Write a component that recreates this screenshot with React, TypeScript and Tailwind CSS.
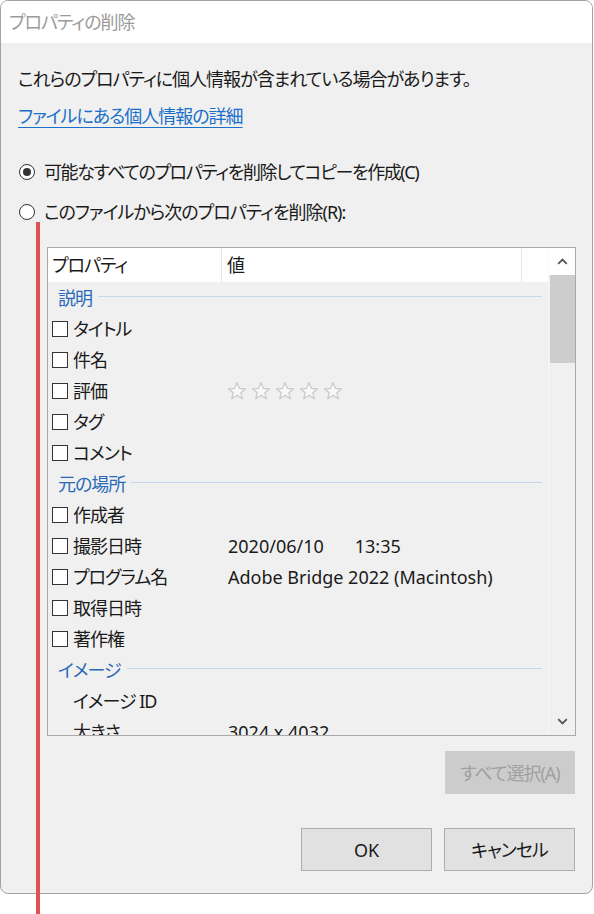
import React from "react";

const FONT = "[font-family:'Noto_Sans','Noto_Sans_CJK_JP',sans-serif]";

function Star() {
  return (
    <svg width="20" height="20" viewBox="0 0 20 20" className="shrink-0">
      <path
        d="M10 1.6 L12.4 7.3 L18.5 7.8 L13.8 11.8 L15.3 17.8 L10 14.5 L4.7 17.8 L6.2 11.8 L1.5 7.8 L7.6 7.3 Z"
        fill="#f7f7f7"
        stroke="#c9c9c9"
        strokeWidth="1.2"
        strokeLinejoin="round"
      />
    </svg>
  );
}

function Check() {
  return <span className="inline-block w-[16px] h-[16px] border-[1.5px] border-[#333] bg-white shrink-0" />;
}

function Group({ label }: { label: string }) {
  return (
    <div className="h-[31px] shrink-0 flex items-center pl-[10px] pr-[6px]">
      <span className="text-[#2a6ab8] leading-none tracking-[-1px]">{label}</span>
      <span className="flex-1 h-px bg-[#c6d6ec] ml-[6px] mt-[-2px]" />
    </div>
  );
}

function Row({ label, value, check = true, stars = false }: { label: string; value?: React.ReactNode; check?: boolean; stars?: boolean }) {
  return (
    <div className="h-[31px] shrink-0 flex items-center pl-[4px] text-[#1a1a1a]">
      <div className="w-[176px] flex items-center">
        {check ? <Check /> : <span className="w-[16px] shrink-0" />}
        <span className="ml-[5px] whitespace-nowrap tracking-[-1px]">{label}</span>
      </div>
      {stars ? (
        <div className="flex gap-[4px] ml-[-1px]">
          <Star />
          <Star />
          <Star />
          <Star />
          <Star />
        </div>
      ) : (
        <span className="whitespace-nowrap">{value}</span>
      )}
    </div>
  );
}

export default function App() {
  return (
    <div className={`relative w-[594px] h-[914px] bg-white ${FONT} [font-feature-settings:'palt'] text-[18px]`}>
      <div className="w-[593px] h-[894px] border border-[#a3a3a3] rounded-[8px] overflow-hidden bg-[#f0f0f0] flex flex-col">
        <div className="h-[42px] bg-white flex items-center pl-[8px] text-[#9b9b9b] shrink-0 tracking-[-1px]">プロパティの削除</div>
        <div className="flex-1 flex flex-col pl-[17px] pt-[26px] leading-[20px] text-[#1a1a1a] tracking-[-1px]">
          <div>これらのプロパティに個人情報が含まれている場合があります。</div>
          <div className="mt-[17px]">
            <span className="text-[#1a6fc9] underline underline-offset-[4px] decoration-1">ファイルにある個人情報の詳細</span>
          </div>
          <div className="mt-[36px] flex items-center">
            <span className="w-[16px] h-[16px] rounded-full border-[1.5px] border-[#333] bg-white flex items-center justify-center ml-[1px] shrink-0">
              <span className="w-[8px] h-[8px] rounded-full bg-[#333]" />
            </span>
            <span className="ml-[9px] tracking-[-1.4px]">可能なすべてのプロパティを削除してコピーを作成(C)</span>
          </div>
          <div className="mt-[20px] flex items-center">
            <span className="w-[16px] h-[16px] rounded-full border-[1.5px] border-[#333] bg-white ml-[1px] shrink-0" />
            <span className="ml-[9px]">このファイルから次のプロパティを削除(R):</span>
          </div>
          <div className="mt-[25px] ml-[29px] w-[529px] h-[489px] border border-[#a9a9a9] flex overflow-hidden tracking-normal">
            <div className="flex-1 flex flex-col overflow-hidden">
              <div className="h-[34px] bg-white flex items-center shrink-0">
                <div className="w-[174px] h-full flex items-center pl-[4px] border-r border-[#e5e5e5] tracking-[-1px]">プロパティ</div>
                <div className="flex-1 h-full flex items-center pl-[5px] border-r border-[#e5e5e5]">値</div>
                <div className="w-[26px]" />
              </div>
              <Group label="説明" />
              <Row label="タイトル" />
              <Row label="件名" />
              <Row label="評価" stars />
              <Row label="タグ" />
              <Row label="コメント" />
              <Group label="元の場所" />
              <Row label="作成者" />
              <Row
                label="撮影日時"
                value={
                  <>
                    <span>2020/06/10</span>
                    <span className="ml-[31px]">13:35</span>
                  </>
                }
              />
              <Row label="プログラム名" value="Adobe Bridge 2022 (Macintosh)" />
              <Row label="取得日時" />
              <Row label="著作権" />
              <Group label="イメージ" />
              <Row label="イメージ ID" check={false} />
              <Row label="大きさ" value="3024 x 4032" check={false} />
            </div>
            <div className="w-[27px] bg-[#f0f0f0] border-l border-[#f8f8f8] flex flex-col items-center shrink-0">
              <div className="h-[27px] w-full bg-white flex items-center justify-center">
                <svg width="11" height="7" viewBox="0 0 11 7">
                  <path d="M1.2 5.8 L5.5 1.5 L9.8 5.8" fill="none" stroke="#555" strokeWidth="1.8" />
                </svg>
              </div>
              <div className="w-[25px] h-[88px] bg-[#cdcdcd]" />
              <div className="flex-1" />
              <div className="h-[28px] w-full flex items-center justify-center">
                <svg width="11" height="7" viewBox="0 0 11 7">
                  <path d="M1.2 1.2 L5.5 5.5 L9.8 1.2" fill="none" stroke="#555" strokeWidth="1.8" />
                </svg>
              </div>
            </div>
          </div>
          <div className="mt-[15px] flex justify-end pr-[17px]">
            <div className="w-[130px] h-[43px] bg-[#cccccc] flex items-center justify-center text-[#a0a0a0]">すべて選択(A)</div>
          </div>
          <div className="mt-[34px] flex justify-end gap-[12px] pr-[17px]">
            <div className="w-[131px] h-[43px] bg-[#e1e1e1] border border-[#adadad] flex items-center justify-center tracking-normal">OK</div>
            <div className="w-[131px] h-[43px] bg-[#e1e1e1] border border-[#adadad] flex items-center justify-center">キャンセル</div>
          </div>
        </div>
      </div>
      <div className="absolute left-[36px] top-[222px] w-[4px] h-[692px] bg-[#e0524f]" />
    </div>
  );
}
